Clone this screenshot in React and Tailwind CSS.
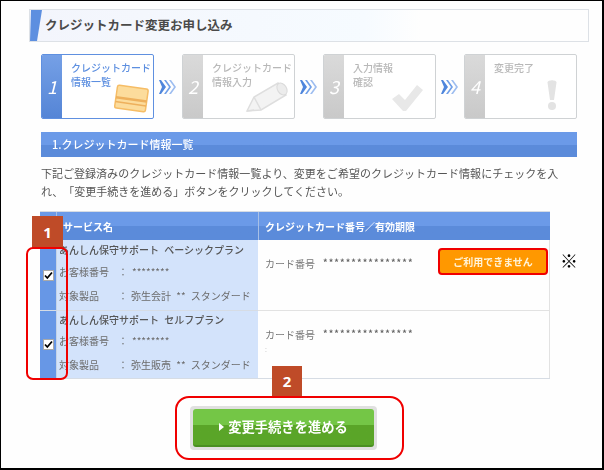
const font = { fontFamily: '"Noto Sans CJK JP","Liberation Sans",sans-serif' };

function Chevrons({ className }) {
  return (
    <svg width="18" height="16" viewBox="0 0 18 16" className={className}>
      <path d="M0 1l2 0 5 7-5 7-2 0 3-7z" fill="#4f86dc" />
      <path d="M5 1h2l5 7-5 7h-2l5-7z" fill="#6f9fe8" />
      <path d="M10 1h2l5 7-5 7h-2l5-7z" fill="#9dbdf0" />
    </svg>
  );
}

function Card() {
  return (
    <svg width="37" height="31" viewBox="0 0 37 31" className="absolute right-[3px] bottom-[4px]">
      <g transform="rotate(8 18 15)">
        <rect x="3" y="4" width="31" height="23" rx="2" fill="#fcdc9c" stroke="#f6bd66" strokeWidth="1.5" />
        <rect x="3" y="15" width="31" height="2.500" fill="#eeb05c" />
        <rect x="3" y="20" width="31" height="1.500" fill="#eeb05c" />
      </g>
    </svg>
  );
}

function Pencil() {
  return (
    <svg width="46" height="34" viewBox="0 0 46 34" className="absolute right-[3px] bottom-[4px]">
      <path d="M2 31l7-14L33 3l8 12-25 15z" fill="#f3f3f3" stroke="#dedede" strokeWidth="1.500" />
      <path d="M9 17l7 13M2 31l7-1" stroke="#dedede" strokeWidth="1.500" fill="none" />
      <ellipse cx="37" cy="9" rx="4.500" ry="6.500" transform="rotate(-32 37 9)" fill="#ececec" stroke="#dadada" />
    </svg>
  );
}

function Check() {
  return (
    <svg width="32" height="28" viewBox="0 0 32 28" className="absolute right-[12px] bottom-[6px]">
      <path d="M1 15l7-5 6 6L26 1l6 5-17 21h-3z" fill="#e8e8e8" />
    </svg>
  );
}

function Bang() {
  return (
    <svg width="12" height="32" viewBox="0 0 12 32" className="absolute right-[18px] bottom-[7px]">
      <path d="M1.500 3.500C1.500 .5 10.500 .5 10.500 3.500L8 21H4z" fill="#e3e3e3" />
      <circle cx="6" cy="27" r="4" fill="#e3e3e3" />
    </svg>
  );
}

function Step({ n, lines, active, icon }) {
  return (
    <div
      className={
        "relative flex w-[113px] h-[65px] rounded-[2px] border bg-white overflow-hidden " +
        (active ? "border-[#5f90e0]" : "border-[#cfd2d4]")
      }
    >
      <div
        className={
          "w-[20px] shrink-0 flex items-center justify-center text-white text-[18px] italic " +
          (active
            ? "bg-gradient-to-b from-[#75a0e6] to-[#5585d6]"
            : "bg-gradient-to-b from-[#dadada] to-[#c9c9c9]")
        }
      >
        {n}
      </div>
      <div
        className={
          "pl-[9px] pt-[6px] text-[10px] leading-[14px] font-medium " +
          (active ? "text-[#5d8fe0]" : "text-[#b8b8b8]")
        }
      >
        {lines.map((l) => (
          <div key={l} className="whitespace-nowrap">{l}</div>
        ))}
      </div>
      {icon}
    </div>
  );
}

function ServiceCell({ title, product, className, titleClass }) {
  return (
    <div className={"bg-[#d3e3fb] border-l border-[#c5d3e6] pl-[2px] text-[10px] text-[#6b6b6b] whitespace-nowrap overflow-hidden [word-spacing:3px] " + className}>
      <div className={"font-medium text-[#555] " + titleClass}>{title}</div>
      <div className="h-6 leading-6 flex">
        <span className="w-[59px]">お客様番号</span>
        <span className="w-[13px]">：</span>
        <span className="ml-[1px]">********</span>
      </div>
      <div className="h-6 leading-6 flex">
        <span className="w-[59px]">対象製品</span>
        <span className="w-[13px]">：</span>
        <span>{product}</span>
      </div>
    </div>
  );
}

function Checkbox({ className }) {
  return (
    <div className={"bg-[#6797e6] flex items-center justify-center " + className}>
      <div className="w-[11px] h-[11px] bg-white border border-[#a9a9a9] flex items-center justify-center">
        <svg width="9" height="9" viewBox="0 0 9 9">
          <path d="M1 4.500l2.300 2.500L8 1.500" fill="none" stroke="#000" strokeWidth="1.800" />
        </svg>
      </div>
    </div>
  );
}

function CardNo() {
  return (
    <div className="flex items-center text-[10px] text-[#777] h-[18px] mt-[14px] ml-[7px] whitespace-nowrap">
      <span className="w-[58px]">カード番号</span>
      <span className="text-[9px] tracking-[1.100px] text-[#666] font-bold">****************</span>
    </div>
  );
}

const headBg = "bg-gradient-to-b from-[#6b9ae8] from-50% to-[#5b8bda] to-50%";

export default function App() {
  return (
    <div
      className="relative w-[604px] h-[470px] overflow-hidden bg-[#fefefe] border-t border-l border-r-2 border-b-2 border-black [text-spacing-trim:space-all]"
      style={font}
    >
      <div className="blur-[0.3px]">
        <div className="ml-[28px] mt-[8px] w-[560px] h-[33px] border border-[#dde1e6] flex items-center bg-gradient-to-r from-[#f3f5fc] via-[#f6fbff] via-60% to-[#fefefe] to-70%">
          <svg width="12" height="31" viewBox="0 0 12 31" className="shrink-0">
            <path d="M1 0h11L7 31H0z" fill="#5d8fe0" />
          </svg>
          <span className="ml-[3px] text-[12.500px] font-bold text-[#4a4a4a]">クレジットカード変更お申し込み</span>
        </div>

        <div className="ml-[40px] mt-[12px] flex items-center gap-[5px] w-[536px]">
          <Step n="1" active lines={["クレジットカード", "情報一覧"]} icon={<Card />} />
          <Chevrons />
          <Step n="2" lines={["クレジットカード", "情報入力"]} icon={<Pencil />} />
          <Chevrons />
          <Step n="3" lines={["入力情報", "確認"]} icon={<Check />} />
          <Chevrons />
          <Step n="4" lines={["変更完了"]} icon={<Bang />} />
        </div>

        <div className={"ml-[40px] mt-[13px] w-[536px] h-[25px] pl-[11px] flex items-center text-[11px] font-medium text-white " + headBg}>
          1.クレジットカード情報一覧
        </div>

        <p className="ml-[40px] mt-[7px] w-[522px] text-[11px] leading-[18px] text-[#555] tracking-[0.02px]">
          下記ご登録済みのクレジットカード情報一覧より、変更をご希望のクレジットカード情報にチェックを入れ、「変更手続きを進める」ボタンをクリックしてください。
        </p>

        <div className="ml-[39px] mt-[11px] w-[510px] grid grid-cols-[16px_202px_292px] grid-rows-[28px_70px_68px] border-y border-[#d6dce4]">
          <div className={headBg} />
          <div className={"border-l border-[#a8c0e6] flex items-center pl-[6px] text-[10px] font-bold text-white " + headBg}>
            サービス名
          </div>
          <div className={"border-l border-[#a8c0e6] flex items-center pl-[6px] text-[10px] font-bold text-white " + headBg}>
            クレジットカード番号／有効期限
          </div>

          <Checkbox className="" />
          <ServiceCell title="あんしん保守サポート ベーシックプラン" product="弥生会計 ** スタンダード" className="" titleClass="h-[20px] leading-[20px]" />
          <div className="flex items-start justify-between border-r border-[#e2e2e2] pr-[1px]">
            <CardNo />
            <div className="mt-[8px] w-[110px] h-[27px] rounded-[4px] border-2 border-[#f00000] bg-[#ff9800] flex items-center justify-center text-[10px] font-bold text-[#fff3d8]">
              ご利用できません
            </div>
          </div>

          <Checkbox className="border-t border-[#d6dce4]" />
          <ServiceCell title="あんしん保守サポート セルフプラン" product="弥生販売 ** スタンダード" className="border-t border-t-[#d6dce4]" titleClass="h-[18px] leading-[18px]" />
          <div className="border-r border-t border-[#e2e2e2]">
            <CardNo />
            <div className="ml-[7px] text-[7px] leading-[12px] text-[#bbb]">:</div>
          </div>
        </div>

        <div className="mt-[27px] ml-[189px] w-[187px] h-[44px] rounded-[4px] bg-[#e0e0e0] p-[3px]">
          <div className="w-full h-full rounded-[3px] bg-gradient-to-b from-[#74c646] from-45% to-[#5aa528] to-45% flex items-center justify-center text-[13.300px] font-bold text-white border-b-2 border-[#4a8f22]">
            <svg width="5" height="8" viewBox="0 0 5 8" className="mr-[4px]">
              <path d="M0 0l5 4-5 4z" fill="#fff" />
            </svg>
            変更手続きを進める
          </div>
        </div>
      </div>

      {/* annotations */}
      <div className="absolute left-[31px] top-[215px] w-[31px] h-[32px] bg-[#bf4b28] text-white text-[15px] font-bold flex items-center justify-center" style={{ fontFamily: '"Open Sans",sans-serif' }}>1</div>
      <div className="absolute left-[25px] top-[246px] w-[42px] h-[133px] rounded-[7px] border-2 border-[#f00000]" />
      <div className="absolute left-[271px] top-[365px] w-[30px] h-[31px] bg-[#bf4b28] text-white text-[15px] font-bold flex items-center justify-center" style={{ fontFamily: '"Open Sans",sans-serif' }}>2</div>
      <div className="absolute left-[174px] top-[395px] w-[229px] h-[64px] rounded-[14px] border-2 border-[#f00000]" />
      <div className="absolute left-[559px] top-[248px] text-[18px] leading-[22px] text-black">※</div>
    </div>
  );
}
